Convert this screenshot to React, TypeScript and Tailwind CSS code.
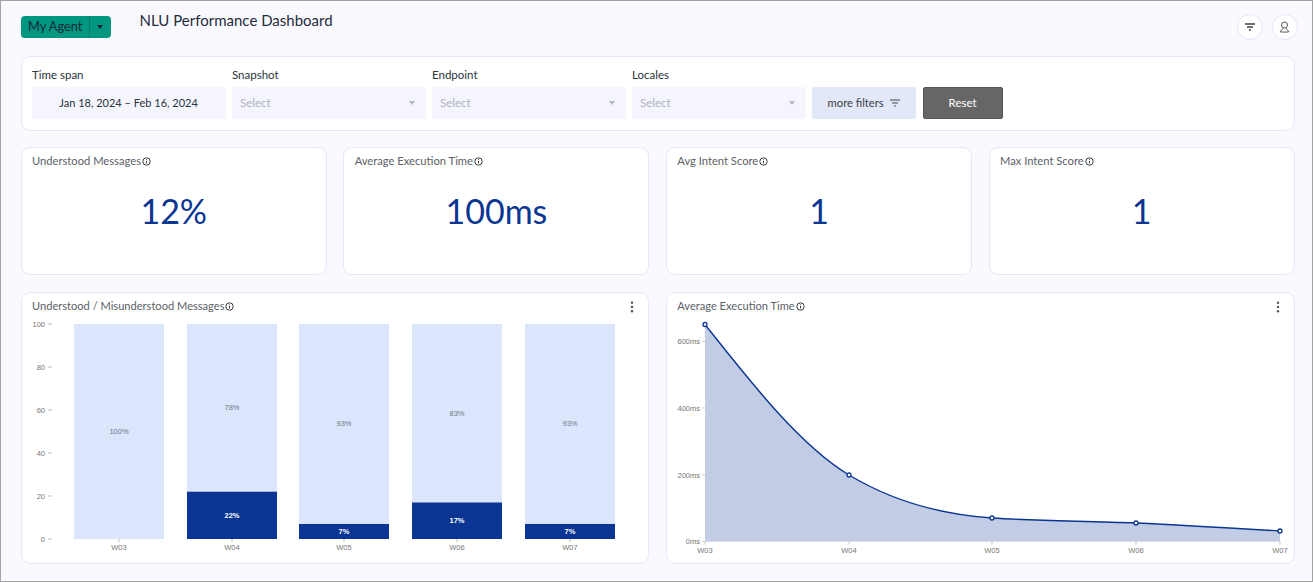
const font = "font-['Lato','Noto_Sans',sans-serif]";

function InfoIcon() {
  return (
    <svg width="9" height="9" viewBox="0 0 9 9" className="ml-[1px] mt-[1px] shrink-0" fill="none" stroke="#3c3c3c">
      <circle cx="4.5" cy="4.5" r="3.7" strokeWidth="1" />
      <path d="M4.5 4v2.400M4.500 2.400v.8" strokeWidth="1" />
    </svg>
  );
}

function FilterIcon({ color = "#444", weight = 1.2 }: { color?: string; weight?: number }) {
  return (
    <svg width="10" height="8" viewBox="0 0 10 8" fill="none" stroke={color} strokeWidth={weight}>
      <path d="M0 1h10M2 4h6M4 7h2" />
    </svg>
  );
}

function Kebab() {
  return (
    <svg width="4" height="12" viewBox="0 0 4 12" fill="#555">
      <circle cx="2" cy="1.7" r="1.2" />
      <circle cx="2" cy="6" r="1.2" />
      <circle cx="2" cy="10.3" r="1.2" />
    </svg>
  );
}

function Select({ width }: { width: string }) {
  return (
    <div className={`flex h-[32px] items-center justify-between rounded-[3px] bg-[#f4f5fd] pl-[8.4px] pr-[11px] text-[11.500px] text-[#b0b3bb] ${width}`}>
      <span>Select</span>
      <span className="h-0 w-0 border-x-[3.5px] border-t-[4px] border-x-transparent border-t-[#b5b8bf]" />
    </div>
  );
}

function FilterField({ label, children }: { label: string; children: React.ReactNode }) {
  return (
    <div className="flex flex-col">
      <span className="mb-[3px] mt-[1px] h-[18px] pl-[0.4px] text-[11.500px] leading-[18px] text-[#2a3340]">{label}</span>
      {children}
    </div>
  );
}

function StatCard({ title, value }: { title: string; value: string }) {
  return (
    <div className="flex h-[128px] flex-col rounded-[9px] border border-[#e3e9f8] bg-white pl-[10.4px] pr-[10px] pt-[5px]">
      <div className="flex h-[16px] items-center text-[11.200px] text-[#5b6168]">
        <span>{title}</span>
        <InfoIcon />
      </div>
      <div className="mt-[20px] text-center text-[34px] leading-[44px] text-[#0b3593]">{value}</div>
    </div>
  );
}

function ChartCard({ title, children }: { title: string; children: React.ReactNode }) {
  return (
    <div className="flex h-[272px] flex-col rounded-[9px] border border-[#e3e9f8] bg-white">
      <div className="flex h-[27px] items-start justify-between pl-[10.4px] pr-[14px] pt-[5px]">
        <div className="flex h-[16px] items-center text-[11.100px] text-[#5b6168]">
          <span>{title}</span>
          <InfoIcon />
        </div>
        <div className="mt-[3px]">
          <Kebab />
        </div>
      </div>
      {children}
    </div>
  );
}

const bars = [
  { week: "W03", x: 74, top: 0, label: "100%" },
  { week: "W04", x: 187, top: 22, label: "78%", bottom: "22%" },
  { week: "W05", x: 299, top: 7, label: "93%", bottom: "7%" },
  { week: "W06", x: 412, top: 17, label: "83%", bottom: "17%" },
  { week: "W07", x: 525, top: 7, label: "93%", bottom: "7%" },
];

function BarChart() {
  const y0 = 539;
  const h = 215;
  const axisFont = "Liberation Sans, Arial, sans-serif";
  return (
    <svg width="626" height="243" viewBox="22 320 626 243" fontFamily={axisFont} fontSize="7.5" fill="#777">
      {[0, 20, 40, 60, 80, 100].map((v) => {
        const y = y0 - (v / 100) * h;
        return (
          <g key={v}>
            <text x="45" y={y + 2.5} textAnchor="end">{v}</text>
            <path d={`M48 ${y}h4`} stroke="#aaa" strokeWidth="0.8" />
          </g>
        );
      })}
      {bars.map((b) => {
        const dark = (b.top / 100) * h;
        const lightH = h - dark;
        return (
          <g key={b.week}>
            <rect x={b.x} y={y0 - h} width="90" height={lightH} fill="#dbe6fd" />
            <text x={b.x + 45} y={y0 - h + lightH / 2 + 2.5} textAnchor="middle" fill="#6f7682">{b.label}</text>
            {b.bottom && (
              <>
                <rect x={b.x} y={y0 - dark} width="90" height={dark} fill="#0b3593" />
                <text x={b.x + 45} y={y0 - dark / 2 + 2.5} textAnchor="middle" fill="#fff" fontWeight="700">{b.bottom}</text>
              </>
            )}
            <path d={`M${b.x + 45} ${y0}v3`} stroke="#aaa" strokeWidth="0.8" />
            <text x={b.x + 45} y="550" textAnchor="middle">{b.week}</text>
          </g>
        );
      })}
    </svg>
  );
}

const curve =
  "M704 324.5C752 385.3 800 446.1 848 475C895.7 503.7 943.3 514.7 991 518C1039 521.3 1087 520.8 1135 523C1183 525.2 1231 528.1 1279 531";
const points = [
  [704, 324.5],
  [848, 475],
  [991, 518],
  [1135, 523],
  [1279, 531],
];

function LineChart() {
  return (
    <svg width="626" height="243" viewBox="666 320 626 243" fontFamily="Liberation Sans, Arial, sans-serif" fontSize="7.5" fill="#777">
      <path d={`${curve}V541.5H704Z`} fill="#c2cde5" />
      <path d={curve} fill="none" stroke="#0b3593" strokeWidth="1.4" />
      {[
        ["0ms", 541.5],
        ["200ms", 475],
        ["400ms", 408],
        ["600ms", 341.5],
      ].map(([label, y]) => (
        <g key={label}>
          <text x="699" y={Number(y) + 2.5} textAnchor="end">{label}</text>
          <path d={`M701 ${y}h3`} stroke="#bbb" strokeWidth="0.8" />
        </g>
      ))}
      <path d="M704 541.5H1279" stroke="#d5dbe8" strokeWidth="0.8" />
      {["W03", "W04", "W05", "W06", "W07"].map((w, i) => (
        <g key={w}>
          <path d={`M${points[i][0]} 541.5v3`} stroke="#bbb" strokeWidth="0.8" />
          <text x={points[i][0]} y="553" textAnchor="middle">{w}</text>
        </g>
      ))}
      {points.map(([x, y]) => (
        <circle key={x} cx={x} cy={y} r="2" fill="#fff" stroke="#0b3593" strokeWidth="1.3" />
      ))}
    </svg>
  );
}

export default function App() {
  return (
    <div className={`h-[582px] w-[1313px] overflow-hidden border border-[#a3a3a3] bg-[#f9f9ff] pl-[19.6px] pr-[17.5px] pt-[15px] ${font}`}>
      {/* Header */}
      <div className="flex h-[40px] items-start">
        <div className="flex h-[22px] w-[90px] items-center rounded-[4px] bg-[#00967f] text-[12.800px] text-[#15283a]">
          <span className="mt-[-1px] w-[68px] pl-[7.4px]">My Agent</span>
          <span className="flex h-full flex-1 items-center justify-center border-l border-[#00806c]">
            <span className="h-0 w-0 border-x-[3.5px] border-t-[4px] border-x-transparent border-t-[#15283a]" />
          </span>
        </div>
        <h1 className="ml-[29px] mt-[-6px] text-[15px] leading-[20px] text-[#1f2c3a]">NLU Performance Dashboard</h1>
        <div className="ml-auto mr-[-3px] mt-[-2px] flex gap-[9px]">
          <button className="flex h-[26px] w-[26px] items-center justify-center rounded-full border border-[#e3e9f8] bg-white">
            <FilterIcon weight={1.5} />
          </button>
          <button className="flex h-[26px] w-[26px] items-center justify-center rounded-full border border-[#e3e9f8] bg-white">
            <svg width="11" height="12" viewBox="0 0 11 12" fill="none" stroke="#444" strokeWidth="0.9">
              <circle cx="5.500" cy="4" r="3" />
              <path d="M4 7.300C4 9 1.200 9 1.200 10.800c1.500.4 7.100.4 8.600 0C9.800 9 7 9 7 7.300" />
            </svg>
          </button>
        </div>
      </div>

      {/* Filters */}
      <div className="flex h-[75px] items-start gap-[6px] rounded-[9px] border border-[#e3e9f8] bg-white px-[10px] pt-[8px]">
        <FilterField label="Time span">
          <div className="flex h-[32px] w-[194px] items-center justify-center rounded-[3px] bg-[#f4f5fd] text-[11px] text-[#2a3340]">
            Jan 18, 2024 – Feb 16, 2024
          </div>
        </FilterField>
        <FilterField label="Snapshot">
          <Select width="w-[194px]" />
        </FilterField>
        <FilterField label="Endpoint">
          <Select width="w-[194px]" />
        </FilterField>
        <FilterField label="Locales">
          <Select width="w-[174px]" />
        </FilterField>
        <button className="mt-[22px] flex h-[32px] w-[104px] items-center justify-center gap-[6px] rounded-[3px] bg-[#e2e8f8] text-[11.200px] text-[#3a4048]">
          more filters
          <FilterIcon />
        </button>
        <button className="ml-[1px] mt-[22px] h-[32px] w-[80px] rounded-[2px] border border-[#555] bg-[#666666] text-[11.500px] text-white">
          Reset
        </button>
      </div>

      {/* Stats */}
      <div className="mt-[16px] grid grid-cols-4 gap-[16.7px]">
        <StatCard title="Understood Messages" value="12%" />
        <StatCard title="Average Execution Time" value="100ms" />
        <StatCard title="Avg Intent Score" value="1" />
        <StatCard title="Max Intent Score" value="1" />
      </div>

      {/* Charts */}
      <div className="mt-[17px] grid grid-cols-2 gap-[16.7px]">
        <ChartCard title="Understood / Misunderstood Messages">
          <BarChart />
        </ChartCard>
        <ChartCard title="Average Execution Time">
          <LineChart />
        </ChartCard>
      </div>
    </div>
  );
}
